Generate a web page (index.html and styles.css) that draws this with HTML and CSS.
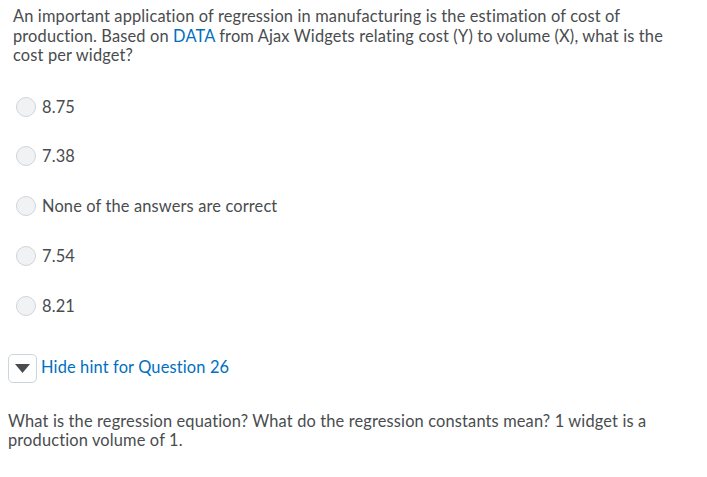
FILE: index.html
```html
<!DOCTYPE html>
<html>
<head>
<meta charset="utf-8">
<link rel="stylesheet" href="styles.css">
</head>
<body>
<div class="question">
  <p class="prompt">An important application of regression in manufacturing is the estimation of cost of production. Based on <a class="link" href="#">DATA</a> from Ajax Widgets relating cost (Y) to volume (X), what is the cost per widget?</p>
  <ul class="options">
    <li class="option"><span class="radio"></span><span class="label">8.75</span></li>
    <li class="option"><span class="radio"></span><span class="label">7.38</span></li>
    <li class="option"><span class="radio"></span><span class="label">None of the answers are correct</span></li>
    <li class="option"><span class="radio"></span><span class="label">7.54</span></li>
    <li class="option"><span class="radio"></span><span class="label">8.21</span></li>
  </ul>
  <div class="hint-toggle">
    <span class="hint-btn"><svg width="15" height="9" viewBox="0 0 15 9"><path d="M0 0 H15 L7.5 9 Z" fill="#494c4e"/></svg></span>
    <a class="link hint-link" href="#">Hide hint for Question 26</a>
  </div>
  <p class="hint-text">What is the regression equation? What do the regression constants mean? 1 widget is a production volume of 1.</p>
</div>
</body>
</html>
```
FILE: styles.css
```css
html, body {
  margin: 0;
  padding: 0;
  background: #fff;
}
body {
  font-family: Lato, "Open Sans", sans-serif;
  font-size: 16.4px;
  letter-spacing: 0.15px;
  color: #494c4e;
}
.question {
  padding: 0 8px;
}
.prompt {
  margin: 6px 0 0 5px;
  line-height: 19.5px;
  width: 660px;
}
.link {
  color: #006fbf;
  text-decoration: none;
}
.options {
  list-style: none;
  margin: 32px 0 0 0;
  padding: 0 0 0 8px;
}
.option {
  display: flex;
  align-items: center;
  height: 20px;
  margin-bottom: 29.9px;
}
.radio {
  width: 18px;
  height: 18px;
  border: 1px solid #cdd5dc;
  border-radius: 50%;
  background: #f1f2f3;
  margin-right: 6px;
  flex: none;
}
.label {
  line-height: 20px;
}
.hint-toggle {
  display: flex;
  align-items: center;
  gap: 4px;
  margin-top: 38px;
}
.hint-btn {
  width: 27px;
  height: 27px;
  border: 1px solid #cdd5dc;
  border-radius: 5px;
  display: flex;
  align-items: center;
  justify-content: center;
  background: #fff;
}
.hint-link {
  position: relative;
  top: -2px;
}
.hint-text {
  margin: 28px 0 0 0;
  line-height: 19px;
  width: 660px;
}
```
